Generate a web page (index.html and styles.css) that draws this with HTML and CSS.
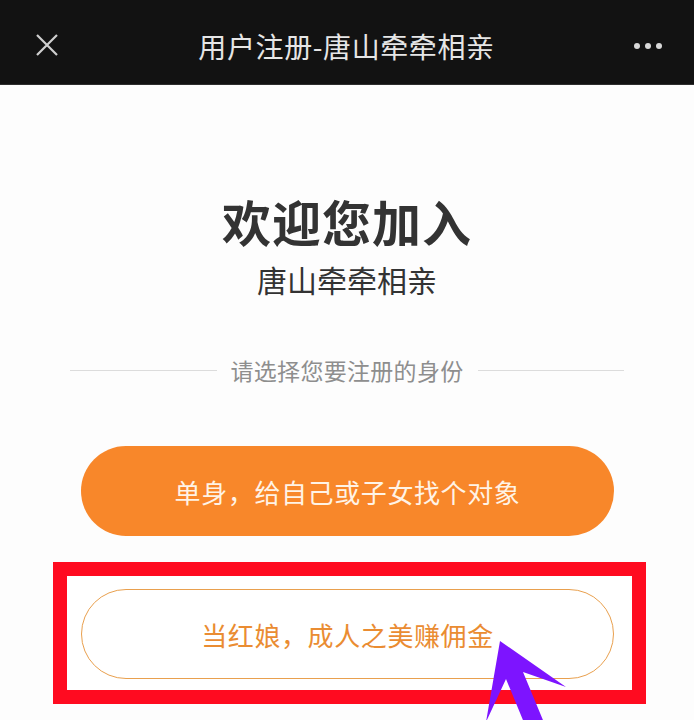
FILE: index.html
```html
<!DOCTYPE html>
<html lang="zh-CN">
<head>
<meta charset="utf-8">
<title>用户注册-唐山牵牵相亲</title>
<link rel="stylesheet" href="styles.css">
</head>
<body>
<div class="page">
  <header class="topbar">
    <svg class="close" width="24" height="24" viewBox="0 0 24 24"><path d="M2 2 L22 22 M22 2 L2 22" stroke="#cfcfcf" stroke-width="2.2" fill="none"/></svg>
    <div class="title">用户注册-唐山牵牵相亲</div>
    <div class="more"><span></span><span></span><span></span></div>
  </header>
  <main class="content">
    <h1 class="welcome">欢迎您加入</h1>
    <div class="brand">唐山牵牵相亲</div>
    <div class="divider"><span class="line"></span><span class="divider-text">请选择您要注册的身份</span><span class="line"></span></div>
    <button class="btn btn-solid">单身，给自己或子女找个对象</button>
    <div class="highlight">
      <button class="btn btn-outline">当红娘，成人之美赚佣金</button>
    </div>
  </main>
  <svg class="arrow" width="694" height="720" viewBox="0 0 694 720"><polygon points="500,641 566,687 523,672 545,725 525,725 506,679 486,722" fill="#7d14ff"/></svg>
</div>
</body>
</html>
```
FILE: styles.css
```css
* { box-sizing: border-box; }
html, body { margin: 0; padding: 0; }
body {
  background: #fff;
  font-family: "Noto Sans CJK SC", "Noto Sans", sans-serif;
}
.page {
  position: relative;
  width: 694px;
  height: 720px;
  overflow: hidden;
  background: #fdfdfd;
}
.topbar {
  height: 85px;
  background: #121212;
  display: flex;
  align-items: center;
  padding: 8px 32px 0 35px;
  border-bottom: 1px solid #2e2e2e;
}
.close { display: block; margin-top: -2px; flex: none; }
.title {
  flex: 1;
  text-align: center;
  color: #e6e6e6;
  font-size: 28px;
  letter-spacing: 0.6px;
}
.more { display: flex; gap: 5px; align-items: center; flex: none; }
.more span {
  width: 6px; height: 6px; border-radius: 50%;
  background: #d8d8d8;
}
.content {
  display: flex;
  flex-direction: column;
  align-items: center;
}
.welcome {
  margin: 104px 0 0;
  font-size: 49px;
  line-height: 64px;
  font-weight: 700;
  color: #333;
  letter-spacing: 1px;
}
.brand {
  margin-top: 6px;
  font-size: 30px;
  line-height: 40px;
  color: #333;
}
.divider {
  margin-top: 56px;
  width: 554px;
  display: flex;
  align-items: center;
  gap: 14px;
}
.line { flex: 1; height: 1px; background: #dcdcdc; }
.divider-text {
  font-size: 23px;
  line-height: 30px;
  color: #8e8e8e;
  letter-spacing: 0.3px;
}
.btn {
  width: 533px;
  height: 90px;
  border-radius: 45px;
  font-family: inherit;
  font-size: 26px;
  letter-spacing: 0.6px;
  display: flex;
  align-items: center;
  justify-content: center;
  cursor: pointer;
}
.btn-solid {
  margin-top: 61px;
  background: #f8872a;
  border: none;
  color: #fff3e6;
  margin-left: 1px;
}
.highlight {
  margin-top: 26px;
  width: 593px;
  border: 14px solid #ff0b20;
  padding: 13px 17px 11px 14px;
  margin-left: 5px;
  background: #fff;
}
.btn-outline {
  background: #fff;
  border: 1.5px solid #e9a04e;
  color: #ea8c32;
}
.arrow {
  position: absolute;
  left: 0;
  top: 0;
  pointer-events: none;
}
```
